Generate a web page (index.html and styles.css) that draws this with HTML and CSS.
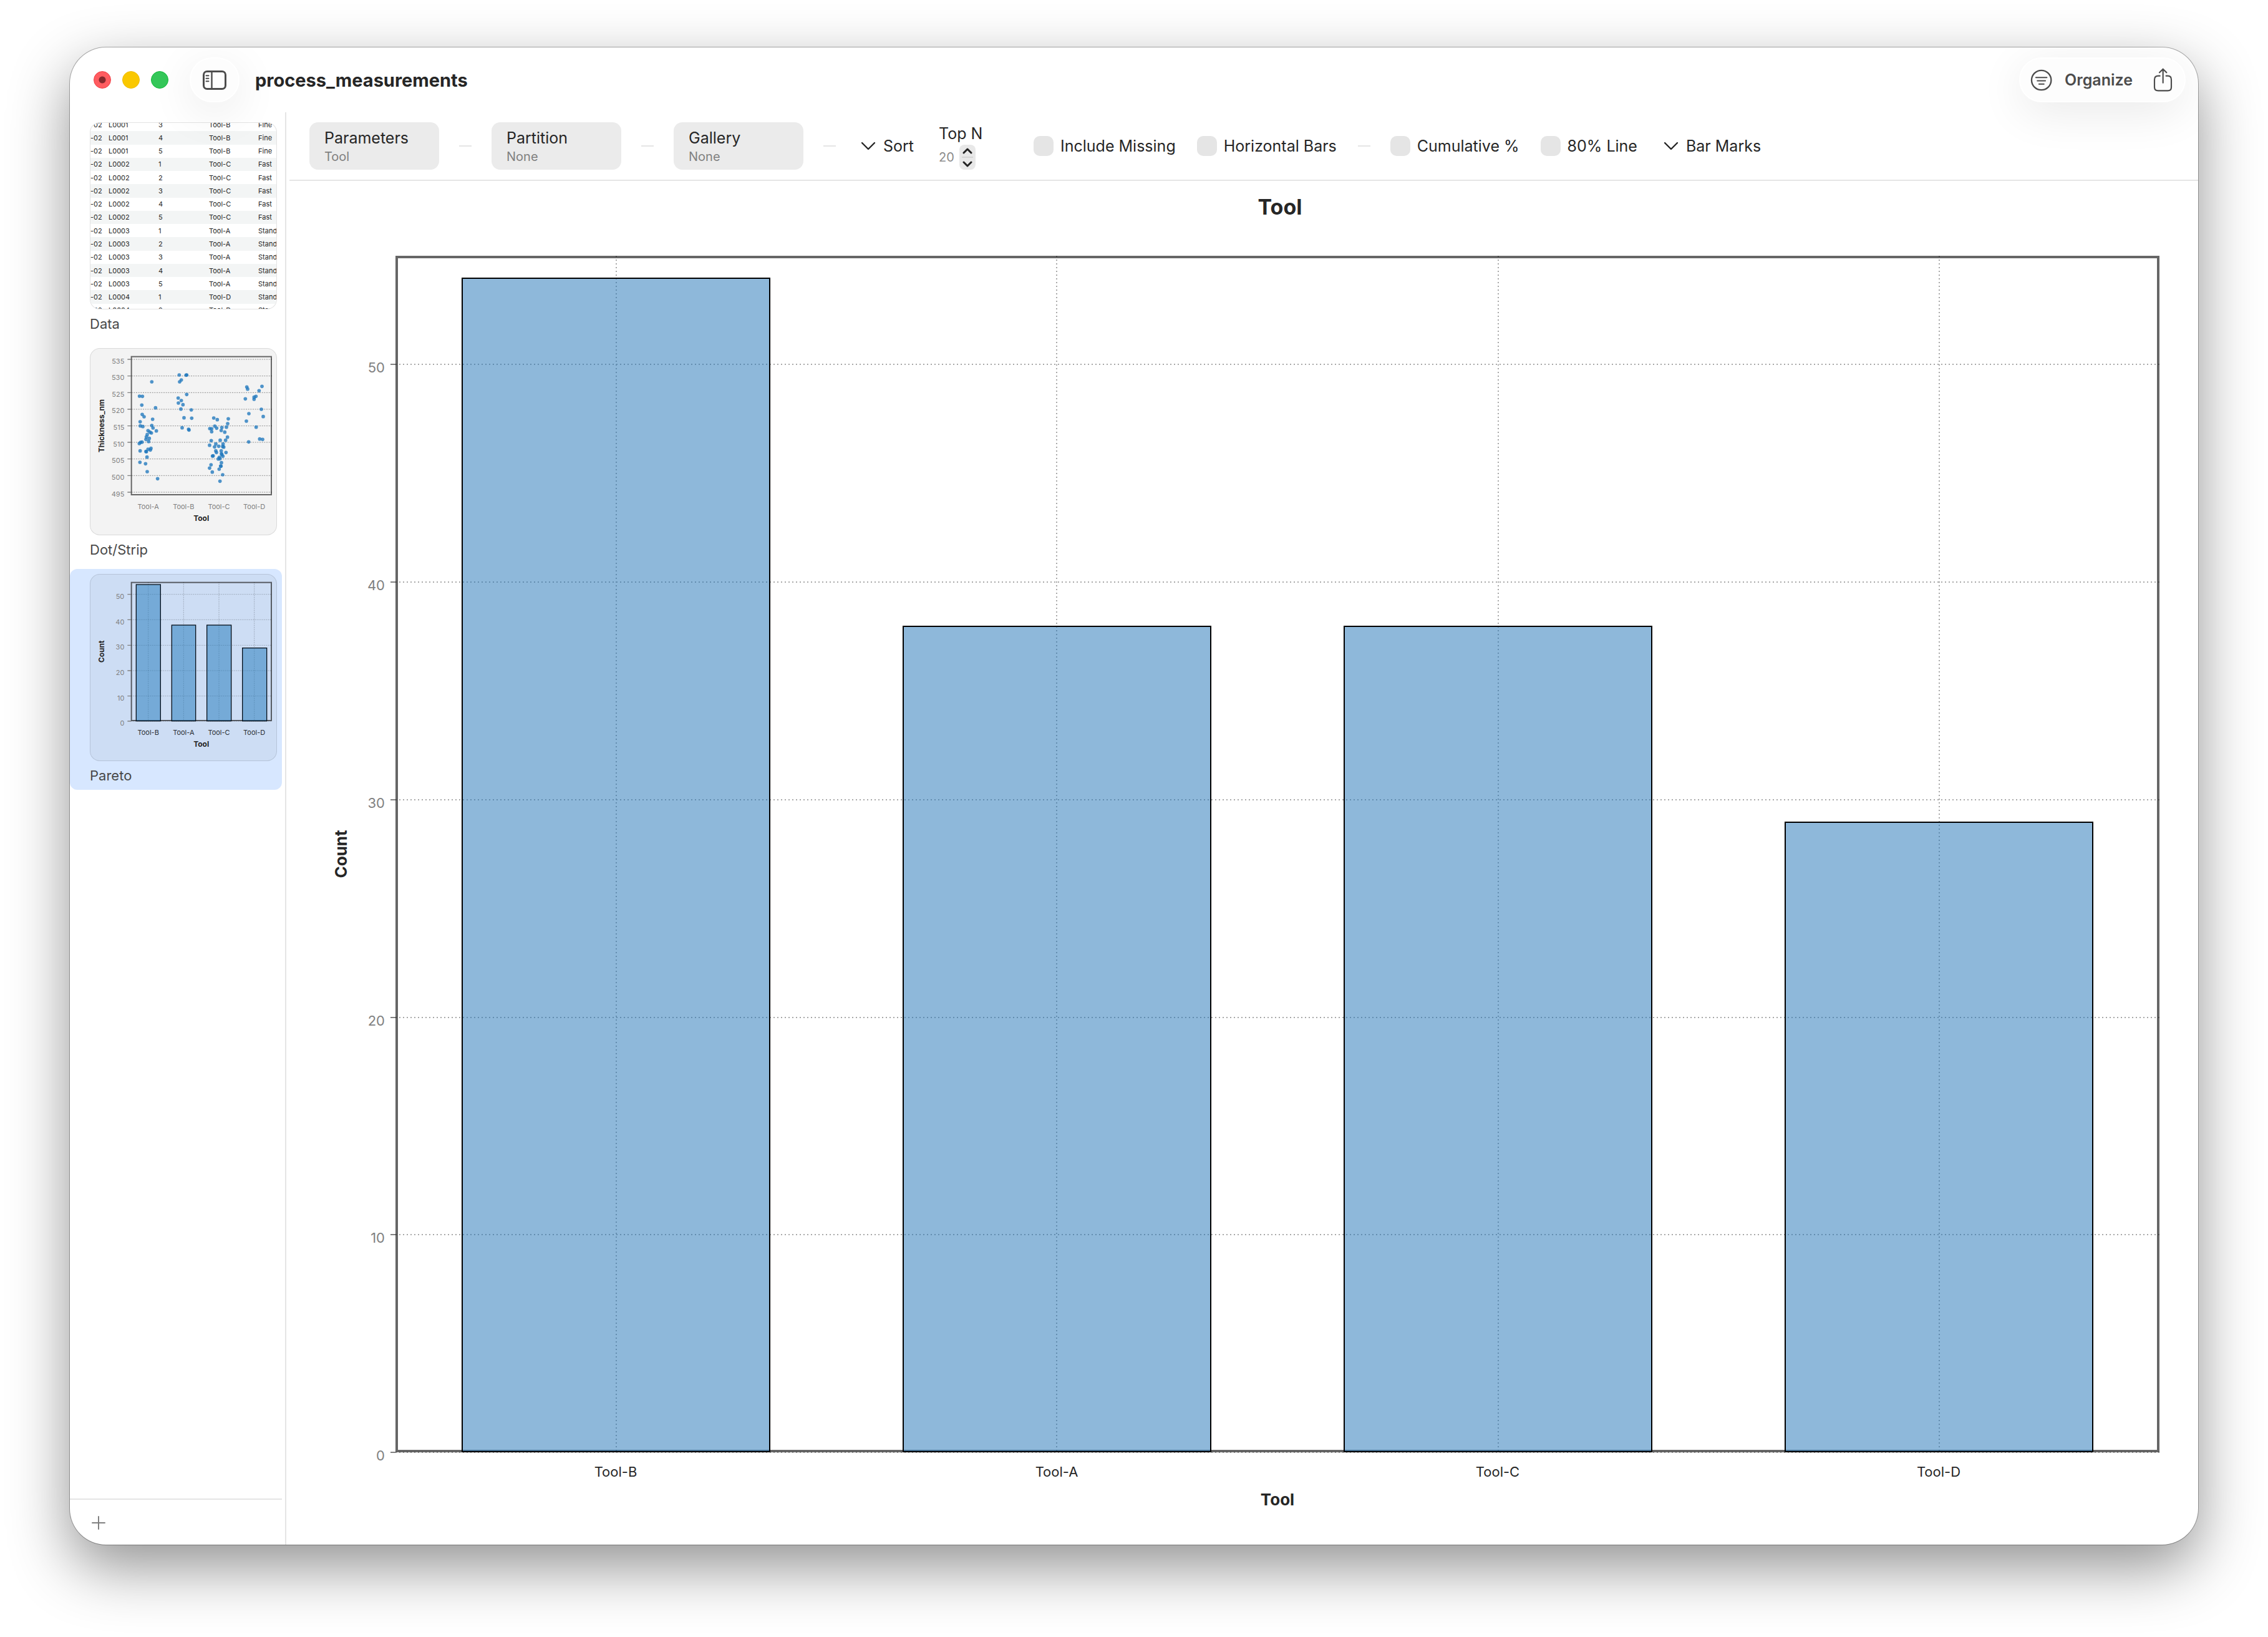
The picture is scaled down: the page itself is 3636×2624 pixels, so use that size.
FILE: index.html
```html
<!DOCTYPE html>
<html lang="en">
<head>
<meta charset="utf-8">
<title>process_measurements</title>
<link rel="stylesheet" href="styles.css">
</head>
<body>
<div class="window">
  <header class="titlebar">
    <div class="lights">
      <button class="light light-close" aria-label="Close"></button>
      <button class="light light-min" aria-label="Minimize"></button>
      <button class="light light-zoom" aria-label="Zoom"></button>
    </div>
    <button class="glass toggle" aria-label="Toggle sidebar">
      <svg width="38" height="31" viewBox="0 0 38 31" fill="none" stroke="#4c4c4c" stroke-linecap="round">
        <rect x="1.5" y="1.5" width="35" height="28" rx="5.5" stroke-width="3"/>
        <path d="M14.5 2v27" stroke-width="2.4"/>
        <path d="M5.5 8.3h4M5.5 12.8h4M5.5 17.2h4" stroke-width="2"/>
      </svg>
    </button>
    <h1 class="doc-title">process_measurements</h1>
    <div class="glass actions">
      <button class="action">
        <svg width="35" height="35" viewBox="462 151 106 106" fill="none" stroke="#4c4c4c" stroke-linecap="round">
          <circle cx="515.500" cy="204" r="47.500" stroke-width="7"/>
          <path d="M489 191h53M496 207h39M504 223h24" stroke-width="6"/>
        </svg>
        <span>Organize</span>
      </button>
      <button class="action" aria-label="Share">
        <svg width="31" height="38" viewBox="1056 151 93 114" fill="none" stroke="#4c4c4c" stroke-width="6.500" stroke-linecap="round" stroke-linejoin="round">
          <path d="M1088 189h-8q-18 0-18 18v36q0 17 18 17h46q17 0 17-17v-36q0-18-17-18h-8"/>
          <path d="M1103 222v-66M1086 173l17-17 17 17"/>
        </svg>
      </button>
    </div>
  </header>

  <div class="body">
    <aside class="sidebar">
      <ul class="sheets">
        <li class="sheet">
          <div class="thumb thumb-table">
            <table class="rows">
              <colgroup><col class="c1"><col class="c2"><col class="c3"><col class="c4"><col class="c5"></colgroup>
              <tbody>
              <tr><td>-02</td><td>L0001</td><td>3</td><td>Tool-B</td><td>Fine</td></tr>
              <tr><td>-02</td><td>L0001</td><td>4</td><td>Tool-B</td><td>Fine</td></tr>
              <tr><td>-02</td><td>L0001</td><td>5</td><td>Tool-B</td><td>Fine</td></tr>
              <tr><td>-02</td><td>L0002</td><td>1</td><td>Tool-C</td><td>Fast</td></tr>
              <tr><td>-02</td><td>L0002</td><td>2</td><td>Tool-C</td><td>Fast</td></tr>
              <tr><td>-02</td><td>L0002</td><td>3</td><td>Tool-C</td><td>Fast</td></tr>
              <tr><td>-02</td><td>L0002</td><td>4</td><td>Tool-C</td><td>Fast</td></tr>
              <tr><td>-02</td><td>L0002</td><td>5</td><td>Tool-C</td><td>Fast</td></tr>
              <tr><td>-02</td><td>L0003</td><td>1</td><td>Tool-A</td><td>Stand</td></tr>
              <tr><td>-02</td><td>L0003</td><td>2</td><td>Tool-A</td><td>Stand</td></tr>
              <tr><td>-02</td><td>L0003</td><td>3</td><td>Tool-A</td><td>Stand</td></tr>
              <tr><td>-02</td><td>L0003</td><td>4</td><td>Tool-A</td><td>Stand</td></tr>
              <tr><td>-02</td><td>L0003</td><td>5</td><td>Tool-A</td><td>Stand</td></tr>
              <tr><td>-02</td><td>L0004</td><td>1</td><td>Tool-D</td><td>Stand</td></tr>
              <tr><td>-02</td><td>L0004</td><td>2</td><td>Tool-D</td><td>Stand</td></tr>
              </tbody>
            </table>
          </div>
          <span class="sheet-name">Data</span>
        </li>
        <li class="sheet">
          <div class="thumb">
            <svg class="mini" viewBox="132 54 900 900">
              <rect class="mini-frame" x="332" y="95" width="673" height="664"/>
              <path class="mini-grid" d="M332 108h676M332 188h676M332 268h676M332 348h676M332 428h676M332 507h676M332 587h676M332 667h676M332 747h676"/>
              <path class="mini-tick" d="M313 108h17M313 188h17M313 268h17M313 348h17M313 428h17M313 507h17M313 587h17M313 667h17M313 747h17"/>
              <g class="mini-y">
                <text x="298" y="129">535</text><text x="298" y="208">530</text><text x="298" y="288">525</text>
                <text x="298" y="367">520</text><text x="298" y="447">515</text><text x="298" y="527">510</text>
                <text x="298" y="607">505</text><text x="298" y="687">500</text><text x="298" y="767">495</text>
              </g>
              <g class="mini-x mini-x-soft">
                <text x="413" y="827">Tool-A</text><text x="583" y="827">Tool-B</text><text x="753" y="827">Tool-C</text><text x="923" y="827">Tool-D</text>
              </g>
              <text class="mini-title" x="668" y="886">Tool</text>
              <text class="mini-title" transform="translate(200 428) rotate(-90)">Thickness_nm</text>
              <g class="dots">
                <circle cx="430" cy="216" r="8.500"/><circle cx="371" cy="285" r="8.500"/><circle cx="385" cy="286" r="8.500"/><circle cx="382" cy="328" r="8.500"/><circle cx="448" cy="341" r="8.500"/><circle cx="384" cy="373" r="8.500"/><circle cx="393" cy="384" r="8.500"/><circle cx="434" cy="396" r="8.500"/><circle cx="374" cy="408" r="8.500"/><circle cx="375" cy="428" r="8.500"/><circle cx="387" cy="431" r="8.500"/><circle cx="430" cy="426" r="8.500"/><circle cx="436" cy="438" r="8.500"/><circle cx="412" cy="451" r="8.500"/><circle cx="452" cy="452" r="8.500"/><circle cx="421" cy="458" r="8.500"/><circle cx="428" cy="462" r="8.500"/><circle cx="408" cy="470" r="8.500"/><circle cx="404" cy="481" r="8.500"/><circle cx="402" cy="493" r="8.500"/><circle cx="418" cy="488" r="8.500"/><circle cx="415" cy="503" r="8.500"/><circle cx="383" cy="506" r="8.500"/><circle cx="376" cy="507" r="8.500"/><circle cx="370" cy="513" r="8.500"/><circle cx="426" cy="536" r="8.500"/><circle cx="412" cy="540" r="8.500"/><circle cx="423" cy="544" r="8.500"/><circle cx="374" cy="548" r="8.500"/><circle cx="402" cy="551" r="8.500"/><circle cx="404" cy="552" r="8.500"/><circle cx="407" cy="578" r="8.500"/><circle cx="373" cy="603" r="8.500"/><circle cx="400" cy="610" r="8.500"/><circle cx="408" cy="648" r="8.500"/><circle cx="458" cy="682" r="8.500"/>
                <circle cx="562" cy="183" r="8.500"/><circle cx="595" cy="184" r="8.500"/><circle cx="598" cy="183" r="8.500"/><circle cx="572" cy="207" r="8.500"/><circle cx="564" cy="216" r="8.500"/><circle cx="598" cy="277" r="8.500"/><circle cx="557" cy="294" r="8.500"/><circle cx="572" cy="306" r="8.500"/><circle cx="558" cy="318" r="8.500"/><circle cx="580" cy="326" r="8.500"/><circle cx="570" cy="347" r="8.500"/><circle cx="620" cy="351" r="8.500"/><circle cx="585" cy="389" r="8.500"/><circle cx="622" cy="391" r="8.500"/><circle cx="576" cy="437" r="8.500"/><circle cx="607" cy="444" r="8.500"/><circle cx="609" cy="448" r="8.500"/>
                <circle cx="728" cy="390" r="8.500"/><circle cx="745" cy="398" r="8.500"/><circle cx="798" cy="394" r="8.500"/><circle cx="795" cy="417" r="8.500"/><circle cx="733" cy="429" r="8.500"/><circle cx="742" cy="439" r="8.500"/><circle cx="767" cy="436" r="8.500"/><circle cx="789" cy="434" r="8.500"/><circle cx="709" cy="441" r="8.500"/><circle cx="718" cy="442" r="8.500"/><circle cx="764" cy="450" r="8.500"/><circle cx="718" cy="456" r="8.500"/><circle cx="781" cy="458" r="8.500"/><circle cx="794" cy="482" r="8.500"/><circle cx="716" cy="499" r="8.500"/><circle cx="759" cy="497" r="8.500"/><circle cx="785" cy="497" r="8.500"/><circle cx="708" cy="521" r="8.500"/><circle cx="738" cy="515" r="8.500"/><circle cx="773" cy="515" r="8.500"/><circle cx="732" cy="529" r="8.500"/><circle cx="752" cy="526" r="8.500"/><circle cx="771" cy="527" r="8.500"/><circle cx="776" cy="530" r="8.500"/><circle cx="738" cy="548" r="8.500"/><circle cx="741" cy="556" r="8.500"/><circle cx="764" cy="548" r="8.500"/><circle cx="787" cy="556" r="8.500"/><circle cx="765" cy="562" r="8.500"/><circle cx="767" cy="566" r="8.500"/><circle cx="722" cy="573" r="8.500"/><circle cx="725" cy="572" r="8.500"/><circle cx="772" cy="574" r="8.500"/><circle cx="755" cy="579" r="8.500"/><circle cx="750" cy="587" r="8.500"/><circle cx="758" cy="586" r="8.500"/><circle cx="765" cy="605" r="8.500"/><circle cx="715" cy="615" r="8.500"/><circle cx="761" cy="621" r="8.500"/><circle cx="763" cy="622" r="8.500"/><circle cx="708" cy="631" r="8.500"/><circle cx="754" cy="636" r="8.500"/><circle cx="721" cy="650" r="8.500"/><circle cx="771" cy="663" r="8.500"/><circle cx="758" cy="694" r="8.500"/>
                <circle cx="887" cy="241" r="8.500"/><circle cx="891" cy="251" r="8.500"/><circle cx="960" cy="238" r="8.500"/><circle cx="946" cy="259" r="8.500"/><circle cx="880" cy="298" r="8.500"/><circle cx="922" cy="290" r="8.500"/><circle cx="931" cy="286" r="8.500"/><circle cx="922" cy="300" r="8.500"/><circle cx="957" cy="348" r="8.500"/><circle cx="897" cy="369" r="8.500"/><circle cx="966" cy="383" r="8.500"/><circle cx="885" cy="405" r="8.500"/><circle cx="932" cy="434" r="8.500"/><circle cx="949" cy="491" r="8.500"/><circle cx="963" cy="493" r="8.500"/><circle cx="896" cy="505" r="8.500"/>
              </g>
            </svg>
          </div>
          <span class="sheet-name">Dot/Strip</span>
        </li>
        <li class="sheet sheet-selected">
          <div class="thumb">
            <svg class="mini" viewBox="132 60 900 900">
              <rect class="mini-frame" x="332" y="101" width="673" height="664"/>
              <path class="mini-grid mini-dotted" d="M332 158h676M332 280h676M332 403h676M332 525h676M332 647h676M332 768h676M413 100v668M583 100v668M753 100v668M923 100v668"/>
              <path class="mini-tick" d="M313 158h17M313 280h17M313 403h17M313 525h17M313 647h17M313 768h17"/>
              <g class="mini-bars">
                <rect x="355" y="111" width="117" height="656"/>
                <rect x="526" y="306" width="115" height="461"/>
                <rect x="695" y="306" width="117" height="461"/>
                <rect x="866" y="416" width="117" height="351"/>
              </g>
              <g class="mini-y">
                <text x="298" y="180">50</text><text x="298" y="302">40</text><text x="298" y="424">30</text>
                <text x="298" y="546">20</text><text x="298" y="668">10</text><text x="298" y="789">0</text>
              </g>
              <g class="mini-x">
                <text x="413" y="833">Tool-B</text><text x="583" y="833">Tool-A</text><text x="753" y="833">Tool-C</text><text x="923" y="833">Tool-D</text>
              </g>
              <text class="mini-title" x="668" y="892">Tool</text>
              <text class="mini-title" transform="translate(200 433) rotate(-90)">Count</text>
            </svg>
          </div>
          <span class="sheet-name">Pareto</span>
        </li>
      </ul>
      <footer class="sidebar-footer">
        <button class="add" aria-label="Add sheet">
          <svg width="22" height="22" viewBox="0 0 22 22" fill="none" stroke="#808080" stroke-width="2" stroke-linecap="round"><path d="M11 1v20M1 11h20"/></svg>
        </button>
      </footer>
    </aside>
    <div class="divider"></div>
    <main class="main">
      <div class="toolbar">
        <button class="field"><span class="field-name">Parameters</span><span class="field-value">Tool</span></button>
        <span class="dash"></span>
        <button class="field"><span class="field-name">Partition</span><span class="field-value">None</span></button>
        <span class="dash"></span>
        <button class="field"><span class="field-name">Gallery</span><span class="field-value">None</span></button>
        <span class="dash"></span>
        <button class="menu">
          <svg width="24" height="14" viewBox="0 0 24 14" fill="none" stroke="#262626" stroke-width="2.400" stroke-linecap="round" stroke-linejoin="round"><path d="M2 2l10 10L22 2"/></svg>
          <span>Sort</span>
        </button>
        <div class="topn">
          <label for="topn">Top N</label>
          <div class="topn-row">
            <input id="topn" type="text" inputmode="numeric" value="20">
            <div class="stepper">
              <button aria-label="Increase"><svg width="16" height="10" viewBox="0 0 16 10" fill="none" stroke="#222" stroke-width="3" stroke-linecap="round" stroke-linejoin="round"><path d="M2 8l6-6 6 6"/></svg></button>
              <button aria-label="Decrease"><svg width="16" height="10" viewBox="0 0 16 10" fill="none" stroke="#222" stroke-width="3" stroke-linecap="round" stroke-linejoin="round"><path d="M2 2l6 6 6-6"/></svg></button>
            </div>
          </div>
        </div>
        <label class="check"><input type="checkbox">Include Missing</label>
        <label class="check"><input type="checkbox">Horizontal Bars</label>
        <span class="dash"></span>
        <label class="check"><input type="checkbox">Cumulative %</label>
        <label class="check"><input type="checkbox">80% Line</label>
        <button class="menu">
          <svg width="24" height="14" viewBox="0 0 24 14" fill="none" stroke="#262626" stroke-width="2.400" stroke-linecap="round" stroke-linejoin="round"><path d="M2 2l10 10L22 2"/></svg>
          <span>Bar Marks</span>
        </button>
      </div>
      <svg class="chart" viewBox="0 0 3060 2186" role="img" aria-label="Pareto chart of Tool">
        <text class="chart-title" x="1588" y="54">Tool</text>
        <rect class="frame" x="172" y="122" width="2824" height="1914"/>
        <path class="grid" d="M170 294h2828M170 643h2828M170 992h2828M170 1341h2828M170 1689h2828M170 2038h2828M524 120v1918M1230 120v1918M1938 120v1918M2645 120v1918"/>
        <path class="tick" d="M162 294h8M162 643h8M162 992h8M162 1341h8M162 1689h8M162 2038h8"/>
        <g class="bars">
          <rect x="277" y="156" width="493" height="1881"/>
          <rect x="984" y="714" width="493" height="1323"/>
          <rect x="1691" y="714" width="493" height="1323"/>
          <rect x="2398" y="1028" width="493" height="1009"/>
        </g>
        <g class="y-labels">
          <text x="153" y="307">50</text><text x="153" y="656">40</text><text x="153" y="1005">30</text>
          <text x="153" y="1354">20</text><text x="153" y="1702">10</text><text x="153" y="2051">0</text>
        </g>
        <g class="x-labels">
          <text x="523" y="2077">Tool-B</text><text x="1230" y="2077">Tool-A</text><text x="1937" y="2077">Tool-C</text><text x="2644" y="2077">Tool-D</text>
        </g>
        <text class="axis-title" x="1584" y="2123">Tool</text>
        <text class="axis-title" transform="translate(92 1079) rotate(-90)">Count</text>
      </svg>
    </main>
  </div>
</div>
</body>
</html>
```
FILE: styles.css
```css
* { box-sizing: border-box; }

body {
  margin: 0;
  min-height: 100vh;
  padding: 76px 112px 148px;
  display: flex;
  background: #fff;
  color: #262626;
  font-family: Inter, "Liberation Sans", sans-serif;
  font-size: 25px;
}

button {
  margin: 0;
  padding: 0;
  border: 0;
  background: none;
  color: inherit;
  font: inherit;
}

svg { display: block; }

.window {
  flex: 1;
  min-width: 0;
  display: flex;
  flex-direction: column;
  overflow: hidden;
  border-radius: 58px;
  background: #fff;
  box-shadow: 0 0 0 1px rgba(0, 0, 0, .3), 0 36px 96px rgba(0, 0, 0, .43);
}

/* Title bar */
.titlebar {
  position: relative;
  z-index: 1;
  display: flex;
  align-items: center;
  padding: 16px 20px 16px 38px;
}

.lights { display: flex; gap: 18px; }

.light {
  width: 28px;
  height: 28px;
  border-radius: 50%;
  border: 1px solid;
}

.light-close {
  border-color: #f03c43;
  background: radial-gradient(circle, #85292c 0 5px, #ff5c60 6px);
}

.light-min { background: #fac800; border-color: #efbc00; }
.light-zoom { background: #34c759; border-color: #12b83a; }

.glass {
  height: 72px;
  display: flex;
  align-items: center;
  border: 2px solid #fff;
  border-radius: 36px;
  background: #fdfdfd;
  box-shadow: 0 16px 72px rgba(0, 0, 0, .09);
}

.toggle {
  width: 80px;
  margin-left: 34px;
  justify-content: center;
}

.doc-title {
  margin: 0 0 0 25px;
  font-size: 29px;
  font-weight: 700;
}

.actions {
  margin-left: auto;
  padding: 0 19px 0 16px;
  gap: 33px;
  color: #4c4c4c;
  font-weight: 600;
}

.action { display: flex; align-items: center; gap: 20px; }

/* Sidebar */
.body { flex: 1; display: flex; align-items: stretch; }

.sidebar {
  width: 340px;
  flex: none;
  display: flex;
  flex-direction: column;
}

.sheets {
  flex: 1;
  margin: 0;
  padding: 8px 0 0;
  display: flex;
  flex-direction: column;
  gap: 8px;
  list-style: none;
}

.sheet {
  padding: 8px 8px 8px 32px;
  border-radius: 12px;
}

.sheet-selected { background: #d7e7ff; }

.thumb {
  width: 300px;
  height: 300px;
  overflow: hidden;
  border: 1px solid rgba(0, 0, 0, .11);
  border-radius: 16px;
  background: rgba(0, 0, 0, .047);
}

.sheet-selected .thumb { background: #cdddf4; }
.thumb-table { background: #fff; }

.sheet-name {
  display: block;
  padding-top: 8px;
  font-size: 22px;
  line-height: 30px;
  color: #484848;
}

.rows {
  width: 298px;
  height: 319px;
  margin-top: -8px;
  table-layout: fixed;
  border-collapse: collapse;
  font-size: 11px;
  line-height: 14px;
  white-space: nowrap;
}

.rows td { padding: 0; }
.rows tr:nth-child(even) { background: #f3f5f5; }
.c1 { width: 29px; }
.c2 { width: 80px; }
.c3 { width: 81px; }
.c4 { width: 79px; }
.c5 { width: 29px; }

.mini { width: 300px; height: 300px; margin: -1px; }
.mini-frame { fill: none; stroke: #666; stroke-width: 6; }
.sheet-selected .mini-frame { stroke: #565b63; }
.mini-grid { stroke: rgba(0, 0, 0, .4); stroke-width: 3; stroke-dasharray: 6 5; }
.mini-dotted { stroke-dasharray: 3 6; }
.mini-tick { stroke: #808080; stroke-width: 4; }
.mini-bars rect { fill: rgba(30, 120, 185, .5); stroke: #06111c; stroke-width: 4; }
.mini-y { font-size: 33px; text-anchor: end; fill: #808080; }
.mini-x { font-size: 33px; text-anchor: middle; fill: #2a2d33; }
.mini-x-soft { fill: #808080; }
.mini-title { font-size: 36px; font-weight: 700; text-anchor: middle; fill: #262626; }
.dots { fill: #1f77bd; fill-opacity: .78; }

.sidebar-footer {
  border-top: 2px solid #e5e5e5;
  padding: 26px 35px 24px;
}

.add { display: block; }

.divider { width: 2px; margin: 0 5px; background: #e5e5e5; }

/* Toolbar */
.main { flex: 1; min-width: 0; }

.toolbar {
  display: flex;
  align-items: center;
  gap: 32px;
  padding: 16px 32px;
  border-bottom: 2px solid #e5e5e5;
}

.field {
  width: 208px;
  height: 76px;
  padding: 8px 24px;
  display: flex;
  flex-direction: column;
  border-radius: 14px;
  background: #ebebeb;
  text-align: left;
}

.field-name { line-height: 34px; }
.field-value { font-size: 20px; line-height: 26px; color: #808080; }

.dash { width: 20px; height: 2px; background: #e5e5e5; }

.menu {
  display: flex;
  align-items: center;
  gap: 12px;
  padding: 0 8px;
}

.topn { width: 120px; height: 76px; }
.topn label { display: block; line-height: 36px; }
.topn-row { display: flex; align-items: center; gap: 8px; }

.topn input {
  width: 25px;
  padding: 0;
  border: 0;
  background: none;
  font: 20px Inter, "Liberation Sans", sans-serif;
  color: #8c8c8c;
}

.stepper {
  width: 26px;
  height: 40px;
  display: flex;
  flex-direction: column;
  border-radius: 8px;
  background: #e8e8e8;
}

.stepper button {
  flex: 1;
  display: flex;
  align-items: center;
  justify-content: center;
}

.stepper button + button { border-top: 2px solid #d4d4d4; margin: 0 4px; }

.check {
  display: flex;
  align-items: center;
  gap: 11px;
  padding-right: 2px;
}

.check input {
  appearance: none;
  width: 32px;
  height: 32px;
  margin: 0;
  border-radius: 10px;
  background: #e5e5e5;
}

/* Pareto chart */
.chart { width: 100%; height: auto; }
.chart-title { font-size: 34px; font-weight: 700; text-anchor: middle; fill: #262626; }
.frame { fill: none; stroke: #666; stroke-width: 4; }
.grid { stroke: rgba(0, 0, 0, .34); stroke-width: 2; stroke-dasharray: 2 4; }
.tick { stroke: #808080; stroke-width: 2; }
.bars rect { fill: rgba(30, 113, 182, .5); stroke: #000; stroke-width: 2; }
.y-labels { font-size: 22px; text-anchor: end; fill: #808080; }
.x-labels { font-size: 22px; text-anchor: middle; fill: #262626; }
.axis-title { font-size: 26px; font-weight: 700; text-anchor: middle; fill: #262626; }
```
